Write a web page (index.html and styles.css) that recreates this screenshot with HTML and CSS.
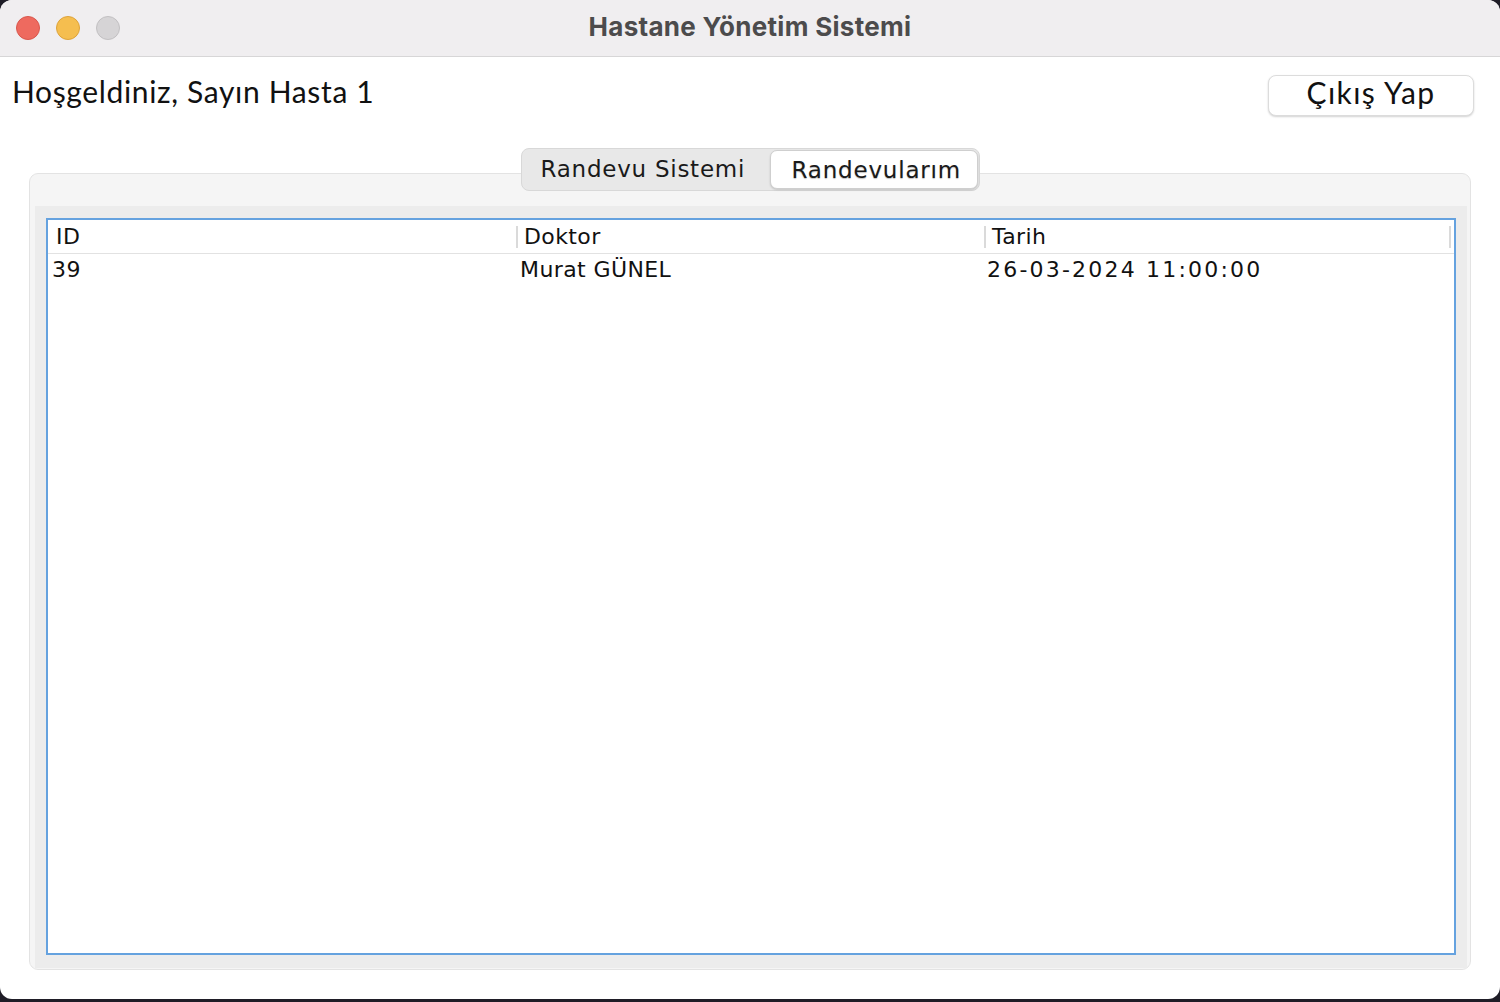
FILE: index.html
```html
<!DOCTYPE html>
<html lang="tr">
<head>
<meta charset="utf-8">
<title>Hastane Yönetim Sistemi</title>
<link rel="stylesheet" href="styles.css">
</head>
<body>
<div class="window">
  <div class="titlebar">
    <div class="lights">
      <span class="light red"></span>
      <span class="light yellow"></span>
      <span class="light gray"></span>
    </div>
    <div class="title">Hastane Yönetim Sistemi</div>
  </div>
  <div class="content">
    <div class="topbar">
      <div class="welcome">Hoşgeldiniz, Sayın Hasta 1</div>
      <button class="logout">Çıkış Yap</button>
    </div>
    <div class="tabpane">
      <div class="tabs">
        <div class="tab">Randevu Sistemi</div>
        <div class="tab active">Randevularım</div>
      </div>
      <div class="panel">
        <div class="panel-inner">
          <div class="table">
            <div class="row head">
              <div class="cell">ID</div>
              <div class="cell">Doktor</div>
              <div class="cell">Tarih</div>
            </div>
            <div class="row body">
              <div class="cell">39</div>
              <div class="cell">Murat GÜNEL</div>
              <div class="cell date">26-03-2024 11:00:00</div>
            </div>
          </div>
        </div>
      </div>
    </div>
  </div>
</div>
</body>
</html>
```
FILE: styles.css
```css
* { box-sizing: border-box; }
html, body { margin: 0; padding: 0; }
body {
  background: #1f1d27;
  width: 1500px;
  height: 1002px;
  overflow: hidden;
}
.window {
  width: 1500px;
  height: 999px;
  background: #ffffff;
  border-radius: 12px;
  overflow: hidden;
  display: flex;
  flex-direction: column;
}
.titlebar {
  height: 57px;
  background: #f0eef0;
  border-bottom: 1px solid #d7d6d7;
  display: flex;
  align-items: center;
  position: relative;
}
.lights {
  display: flex;
  gap: 16px;
  padding-left: 16px;
}
.light {
  width: 24px;
  height: 24px;
  border-radius: 50%;
  display: block;
}
.red { background: #ee6a5f; border: 1px solid #d9574d; }
.yellow { background: #f5be4f; border: 1px solid #dea33a; }
.gray { background: #d6d4d6; border: 1px solid #c2c0c2; }
.title {
  position: absolute;
  left: 0;
  right: 0;
  top: 0;
  height: 56px;
  line-height: 54px;
  text-align: center;
  font-family: "Inter", "Liberation Sans", sans-serif;
  font-weight: 700;
  font-size: 26px;
  letter-spacing: 0.3px;
  color: #4c4b4c;
  pointer-events: none;
}
.content {
  flex: 1;
  display: flex;
  flex-direction: column;
  padding: 0 29px 29px 29px;
}
.topbar {
  display: flex;
  justify-content: space-between;
  align-items: flex-start;
  margin: 0 -3px 0 -17px;
  height: 91px;
}
.welcome {
  font-family: "Lato", "Noto Sans", sans-serif;
  font-size: 30px;
  color: #111;
  padding-top: 16px;
  letter-spacing: 0.65px;
}
.logout {
  margin-top: 18px;
  width: 206px;
  height: 41px;
  background: #fff;
  border: 1px solid #dcdcdc;
  border-radius: 8px;
  box-shadow: 0 1px 2px rgba(0,0,0,0.18);
  font-family: "Lato", "Noto Sans", sans-serif;
  font-size: 30px;
  color: #111;
  padding: 0 0 8px 0;
  line-height: 30px;
  letter-spacing: 1.4px;
}
.tabpane {
  flex: 1;
  display: flex;
  flex-direction: column;
}
.tabs {
  align-self: center;
  display: flex;
  height: 43px;
  background: #e8e8e8;
  border: 1px solid #d8d8d8;
  border-radius: 8px;
  margin-bottom: -18px;
  position: relative;
  z-index: 1;
  padding: 1px 1px 1px 0;
}
.tab {
  font-family: "DejaVu Sans", sans-serif;
  font-size: 23px;
  color: #1a1a1a;
  line-height: 38px;
  padding: 0 0 0 19px;
  width: 248px;
  letter-spacing: 0.75px;
  white-space: nowrap;
}
.tab.active {
  width: 208px;
  background: #ffffff;
  border: 1px solid #cfcfcf;
  border-radius: 7px;
  box-shadow: 0 1px 2px rgba(0,0,0,0.15);
  padding: 0 0 0 21px;
  text-shadow: 0 1px 1px rgba(0,0,0,0.25);
  line-height: 38px;
  letter-spacing: 0.8px;
}
.panel {
  flex: 1;
  background: #f5f5f5;
  border: 1px solid #e3e3e3;
  border-radius: 9px;
  padding: 32px 3px 1px 5px;
  display: flex;
}
.panel-inner {
  flex: 1;
  background: #ececec;
  padding: 12px 11px 13px 11px;
  display: flex;
}
.table {
  flex: 1;
  background: #fff;
  border: 2px solid #65a2df;
}
.row {
  display: grid;
  grid-template-columns: 468px 468px 1fr;
}
.row.head {
  height: 34px;
  border-bottom: 1px solid #e2e2e2;
}
.cell {
  font-family: "DejaVu Sans", sans-serif;
  font-size: 22px;
  color: #111;
  letter-spacing: 0.4px;
}
.head .cell {
  padding-left: 8px;
  line-height: 33px;
}
.head .cell:nth-child(n+2) {
  background-image: linear-gradient(#dadada, #dadada);
  background-size: 2px 22px;
  background-position: 0 6px;
  background-repeat: no-repeat;
}
.head .cell:nth-child(3) {
  background-image: linear-gradient(#dadada, #dadada), linear-gradient(#dadada, #dadada);
  background-size: 2px 22px, 2px 22px;
  background-position: 0 6px, 465px 6px;
}
.body .cell {
  padding-left: 4px;
  line-height: 32px;
}
.body .cell.date {
  padding-left: 3px;
  letter-spacing: 2.2px;
}
```
